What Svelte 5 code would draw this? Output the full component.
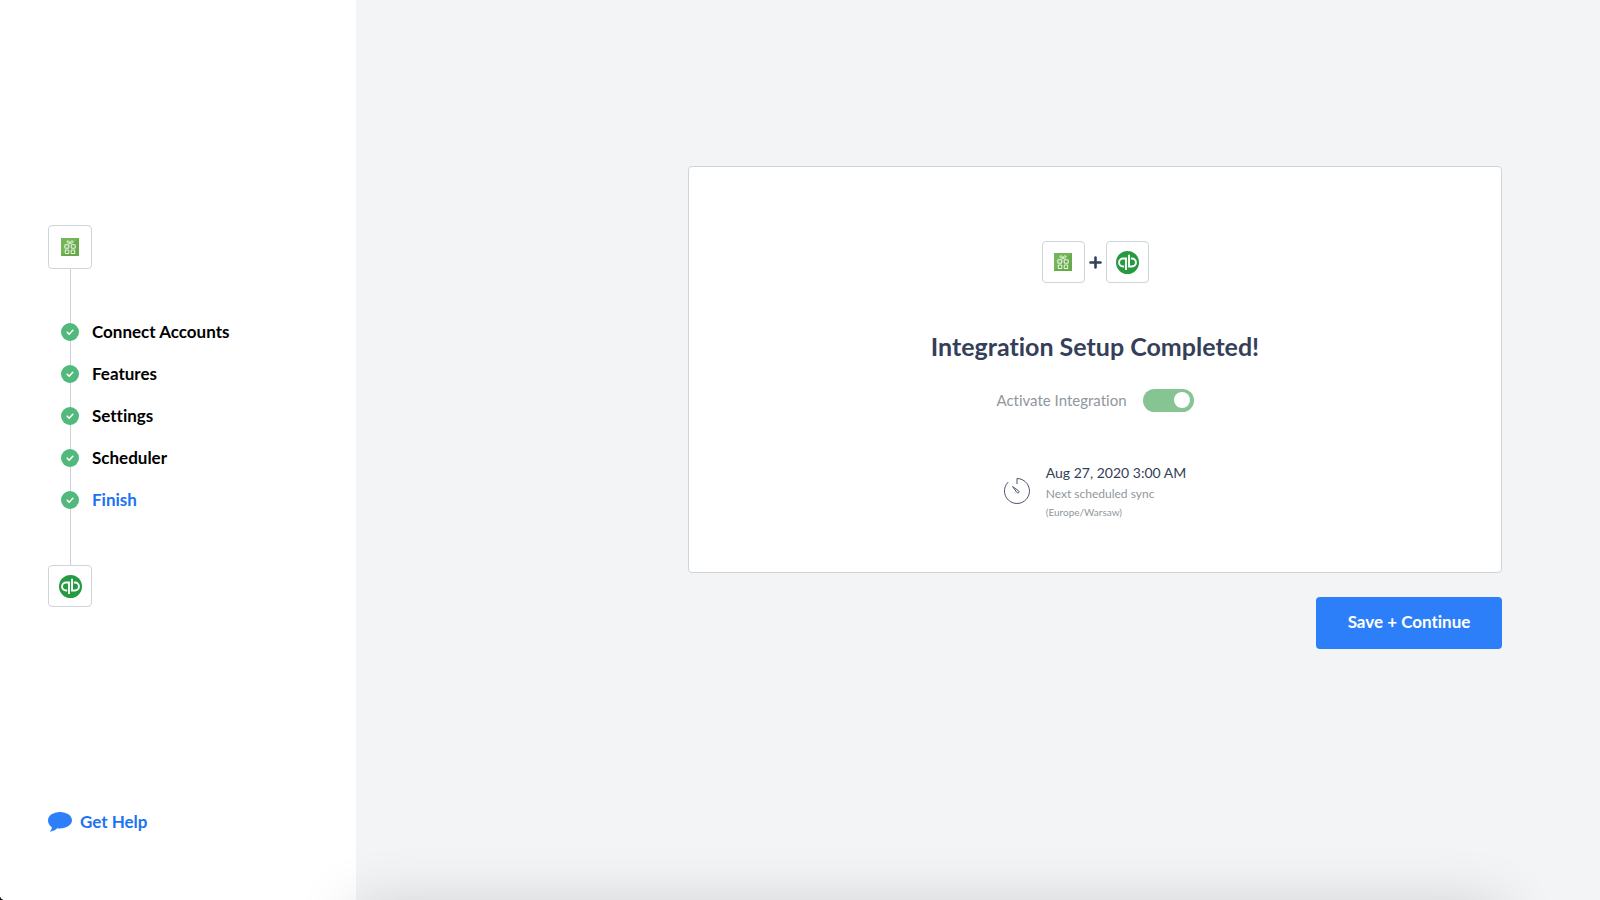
<script lang="ts">
  type Step = { label: string; current?: boolean };

  const steps: Step[] = [
    { label: "Connect Accounts" },
    { label: "Features" },
    { label: "Settings" },
    { label: "Scheduler" },
    { label: "Finish", current: true },
  ];

  let active = $state(true);
</script>

{#snippet gift()}
  <span class="app-box">
    <svg class="gift" viewBox="0 0 18 18" aria-hidden="true">
      <rect width="18" height="18" fill="#74b657" />
      <path d="M18 0v18H0z" fill="#5a9e41" opacity=".5" />
      <g fill="none" stroke="#eef7ea" stroke-width="1">
        <path d="M3.800 6.800h4v3.400h-4zM10.200 6.800h4v3.400h-4zM4.300 12h3.500v3.500H4.300zM10.200 12h3.500v3.500h-3.500z" />
        <path d="M9 5.200C7.500 5.400 5.600 4.800 6 3.400S8.500 3 9 5.200C9.500 3 11.600 2 12 3.400S10.500 5.400 9 5.200z" />
      </g>
    </svg>
  </span>
{/snippet}

{#snippet quickbooks()}
  <span class="app-box">
    <svg class="qb" viewBox="0 0 24 24" aria-hidden="true">
      <circle cx="12" cy="12" r="12" fill="#259a41" />
      <g fill="none" stroke="#fff" stroke-width="2">
        <path d="M8.500 16.200H7.400a4.200 4.200 0 0 1 0-8.400h3v12" />
        <path d="M15.500 7.800h1.100a4.200 4.200 0 0 1 0 8.400h-3V3.800" />
      </g>
    </svg>
  </span>
{/snippet}

<div class="page">
  <aside class="sidebar">
    <div class="timeline">
      {@render gift()}
      <ol class="steps">
        {#each steps as step (step.label)}
          <li class="step" class:current={step.current} aria-current={step.current ? "step" : undefined}>
            <svg class="check" viewBox="0 0 18 18" aria-hidden="true">
              <circle cx="9" cy="9" r="9" fill="#52b97c" />
              <path d="M6.200 9.200l2 2 3.600-3.900" fill="none" stroke="#fff" stroke-width="1.600" stroke-linecap="round" />
            </svg>
            <span class="step-label">{step.label}</span>
          </li>
        {/each}
      </ol>
      {@render quickbooks()}
    </div>

    <a class="help" href="#help">
      <svg class="bubble" viewBox="0 0 24 20" aria-hidden="true">
        <path d="M12 0c6.600 0 12 3.600 12 8.200s-5.400 8.200-12 8.200c-1 0-1.900-.1-2.800-.2C7.400 18 5 19.400 1.700 19.800c1.200-1.200 2-2.600 2.200-4.500C1.500 13.800 0 11.200 0 8.200 0 3.600 5.400 0 12 0z" fill="#2d7ff9" />
      </svg>
      <span>Get Help</span>
    </a>
  </aside>

  <main class="content">
    <section class="card">
      <div class="pair">
        {@render gift()}
        <svg class="plus" viewBox="0 0 13 13" aria-hidden="true">
          <path d="M6.500 1.500v10M1.500 6.500h10" stroke="#344059" stroke-width="2.600" stroke-linecap="round" />
        </svg>
        {@render quickbooks()}
      </div>

      <h1>Integration Setup Completed!</h1>

      <div class="activate">
        <label for="activate">Activate Integration</label>
        <input id="activate" class="toggle" type="checkbox" role="switch" bind:checked={active} />
      </div>

      <div class="schedule">
        <svg class="timer" viewBox="0 0 26 28" aria-hidden="true">
          <g fill="none" stroke="#4a536b" stroke-width="1">
            <path d="M13 7V1.500a12.500 12.500 0 1 1-8.800 3.600" />
            <path d="M8.500 9.500l6.200 4.400a1.200 1.200 0 0 1-1.700 1.700z" />
          </g>
        </svg>
        <div class="when">
          <span class="date">Aug 27, 2020 3:00 AM</span>
          <span class="note">Next scheduled sync</span>
          <span class="zone">(Europe/Warsaw)</span>
        </div>
      </div>
    </section>

    <button class="save" type="button">Save + Continue</button>
  </main>

  <div class="dock-shadow"></div>
  <div class="corner"></div>
</div>

<style>
  :global(body) { background: #f2f4f6; }

  .page {
    position: relative;
    display: grid;
    grid-template-columns: 356px 1fr;
    min-height: 100vh;
    overflow: hidden;
    font-family: Lato, "Liberation Sans", sans-serif;
    font-variant-ligatures: none;
    color: #000;
  }

  .sidebar {
    display: flex;
    flex-direction: column;
    justify-content: space-between;
    align-items: flex-start;
    box-sizing: border-box;
    padding: 225px 48px 68px;
    background: #fff;
  }

  /* the rail runs behind the boxes and the ticks */
  .timeline {
    background: linear-gradient(#cdd1d6, #cdd1d6) 22px 0 / 1px 100% no-repeat;
  }

  .app-box {
    display: flex;
    align-items: center;
    justify-content: center;
    box-sizing: border-box;
    width: 43px;
    height: 42px;
    background: #fff;
    border: 1px solid #ced4da;
    border-radius: 4px;
  }
  .timeline .app-box { width: 44px; }
  .timeline .app-box:first-child { height: 44px; }

  .gift { width: 18px; height: 18px; }
  .qb { width: 23px; height: 23px; }

  .steps {
    margin: 0;
    padding: 42px 0 44px 13px;
    list-style: none;
  }

  .step {
    display: flex;
    align-items: center;
    gap: 13px;
    height: 42px;
    font-size: 17px;
    font-weight: 700;
  }
  .step.current { color: #1a73f5; }
  .step-label { padding-bottom: 2px; }

  .check { width: 18px; height: 18px; }

  .help {
    display: flex;
    align-items: center;
    gap: 8px;
    color: #1a73f5;
    font-size: 17px;
    font-weight: 700;
    line-height: 20px;
    text-decoration: none;
  }
  .bubble { width: 24px; height: 20px; }

  .content {
    display: flex;
    flex-direction: column;
    align-items: flex-end;
    gap: 24px;
    padding: 166px 98px 48px;
  }

  .card {
    display: flex;
    flex-direction: column;
    align-items: center;
    box-sizing: border-box;
    width: 100%;
    max-width: 814px;
    padding: 74px 32px 52px;
    background: #fff;
    border: 1px solid #ced4da;
    border-radius: 4px;
  }

  .pair {
    display: flex;
    align-items: center;
    gap: 4px;
  }
  .plus { width: 13px; height: 13px; }

  h1 {
    margin: 47px 0 0;
    color: #344059;
    font-size: 25px;
    font-weight: 700;
    line-height: 32px;
  }

  .activate {
    display: flex;
    align-items: center;
    gap: 16px;
    margin-top: 26px;
    color: #8f979e;
    font-size: 15px;
    line-height: 24px;
  }

  .toggle {
    appearance: none;
    display: flex;
    align-items: center;
    box-sizing: border-box;
    width: 51px;
    height: 23px;
    margin: 0;
    padding: 0 4px;
    background: #c4c9ce;
    border-radius: 12px;
    cursor: pointer;
  }
  .toggle::before {
    content: "";
    width: 16px;
    height: 16px;
    border-radius: 50%;
    background: #fff;
  }
  .toggle:checked {
    justify-content: flex-end;
    background: #86c593;
  }

  .schedule {
    display: flex;
    align-items: center;
    gap: 16px;
    margin-top: 50px;
  }
  .timer { width: 26px; height: 28px; }

  .when {
    display: flex;
    flex-direction: column;
    color: #8f979e;
  }
  .date { color: #344059; font-size: 14px; line-height: 22px; }
  .note { font-size: 12px; line-height: 20px; }
  .zone { font-size: 10px; line-height: 16px; }

  .save {
    width: 186px;
    height: 52px;
    padding: 0 0 4px;
    background: #2d7ff9;
    border: none;
    border-radius: 4px;
    color: #fff;
    font: inherit;
    font-size: 17px;
    font-weight: 700;
    cursor: pointer;
  }

  .dock-shadow {
    position: absolute;
    top: 100%;
    left: 352px;
    right: 98px;
    height: 80px;
    box-shadow: 0 6px 60px rgba(0, 0, 0, .16);
    pointer-events: none;
  }

  .corner {
    position: absolute;
    bottom: 0;
    left: 0;
    width: 3px;
    height: 3px;
    background: radial-gradient(circle at 100% 0, transparent 2px, #000 3px);
  }
</style>
